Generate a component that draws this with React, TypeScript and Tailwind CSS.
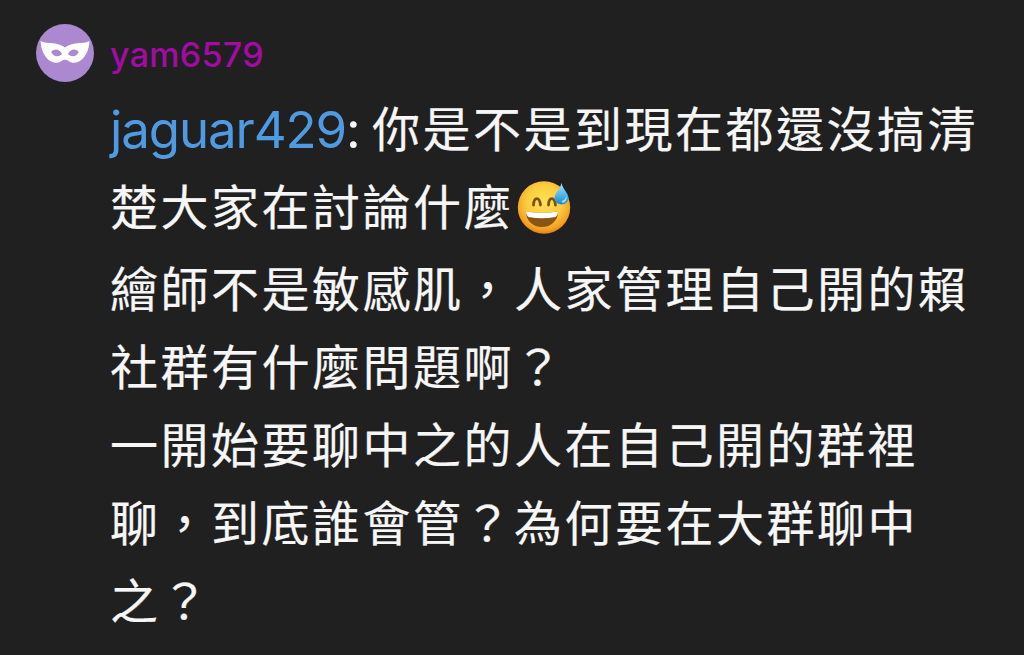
import React from "react";

const MaskIcon = () => {
  return (
    <svg className="h-[58px] w-[58px] shrink-0" viewBox="0 0 58 58" aria-hidden="true">
      <circle cx="29" cy="29" r="29" fill="#ab88cf" />
      <path
        fill="#fff"
        fillRule="evenodd"
        d="M4.500 17C9 19.500 14 18.500 19 19.500C24 20.500 26.500 21.500 29 23.500C31.500 21.500 34 20.500 39 19.500C44 18.500 49 19.500 53.500 17C53 26 49.500 34 43 37.500C39 39.500 35 39 32.500 37Q29 34.500 25.500 37C23 39 19 39.500 15 37.500C8.500 34 5 26 4.500 17ZM15.200 28C17.500 33 22.500 33.500 26 30C24 24.500 17.500 24 15.200 28ZM42.800 28C40.500 24 34 24.500 32 30C35.500 33.500 40.500 33 42.800 28Z"
      />
    </svg>
  );
};

const SweatSmile = () => {
  return (
    <svg className="ml-[3px] mt-1.5 h-[54px] w-[54px] shrink-0" viewBox="0 0 54 54" role="img" aria-label="😅">
      <defs>
        <radialGradient id="face" cx="0.5" cy="0.4" r="0.62">
          <stop offset="0" stopColor="#ffe25b" />
          <stop offset="0.55" stopColor="#fdcc3c" />
          <stop offset="0.85" stopColor="#f4a023" />
          <stop offset="1" stopColor="#dc7914" />
        </radialGradient>
        <linearGradient id="drop" x1="0" y1="0" x2="0" y2="1">
          <stop offset="0" stopColor="#b5e6fb" />
          <stop offset="0.5" stopColor="#55bdf0" />
          <stop offset="1" stopColor="#1787d2" />
        </linearGradient>
      </defs>
      <circle cx="27" cy="27.500" r="26.200" fill="url(#face)" />
      <g fill="none" stroke="#80500f" strokeWidth="2.800" strokeLinecap="round">
        <path d="M16.500 25C17 16.500 22.500 16.500 23.500 25" />
        <path d="M31.500 25C32 16.500 37.500 16.500 38.500 25" />
      </g>
      <path fill="#8a5413" d="M9 31.500Q25 34 41 31.500C41 41 34 47 25 47S9 41 9 31.500Z" />
      <path fill="#fff" d="M9 31.500Q25 34 41 31.500C41 34 40 36 38.500 37Q25 39.500 11.500 37C10 36 9 34 9 31.500Z" />
      <path fill="url(#drop)" d="M44.500 3C46 10 51.500 13 51.500 18C51 26.500 38.500 26.500 37.500 18.500C37.500 13 43 10 44.500 3Z" />
      <path fill="#fff" opacity="0.6" d="M44.500 21C47.500 20.500 49 18.500 49 15.500C50.500 19 49 22.500 45.500 23Z" />
    </svg>
  );
};

interface LineProps {
  children: React.ReactNode;
  className?: string;
}

const Line = ({ children, className = "h-[78px]" }: LineProps) => {
  return <div className={`flex items-center whitespace-nowrap ${className}`}>{children}</div>;
};

export default function App() {
  return (
    <div className="h-[655px] w-[1024px] overflow-hidden bg-[#202020] pl-9 pt-6 text-[#f6f6f6]">
      <div className="flex h-[58px] items-center">
        <MaskIcon />
        <span className="ml-4 pt-1 font-['Inter',sans-serif] text-[34px] font-medium leading-[40px] tracking-[0.3px] text-[#a30ba5]">
          yam6579
        </span>
      </div>

      <div className="ml-[74px] mt-[5px] font-['Noto_Sans_CJK_TC',sans-serif] text-[48px] leading-[78px] tracking-[2.5px] [-webkit-text-stroke:0.2px_#f6f6f6]">
        <Line>
          <span className="w-[236px] pt-2 font-['Inter',sans-serif] text-[51px] tracking-[-1.1px] text-[#4f9be3] [-webkit-text-stroke:0px]">
            jaguar429
          </span>
          <span className="w-[26px] pt-2 font-['Inter',sans-serif] text-[51px] tracking-normal [-webkit-text-stroke:0px]">:</span>
          <span>你是不是到現在都還沒搞清</span>
        </Line>
        <Line>
          <span>楚大家在討論什麼</span>
          <SweatSmile />
        </Line>
        <Line className="mt-1 h-[78px]">繪師不是敏感肌，人家管理自己開的賴</Line>
        <Line>社群有什麼問題啊？</Line>
        <Line>一開始要聊中之的人在自己開的群裡</Line>
        <Line>聊，到底誰會管？為何要在大群聊中</Line>
        <Line>之？</Line>
      </div>
    </div>
  );
}
